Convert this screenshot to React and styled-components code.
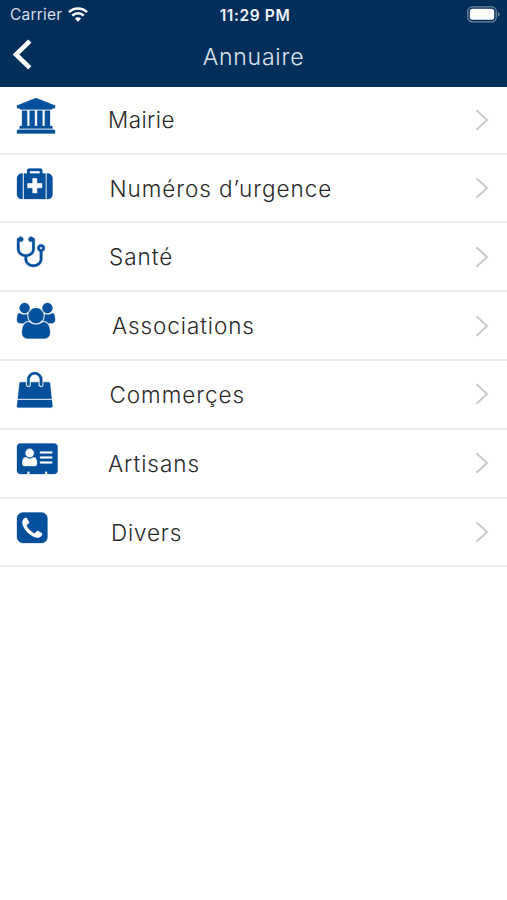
import React from "react";
import styled, { createGlobalStyle } from "styled-components"

const GlobalStyle = createGlobalStyle`
  body {
    margin: 0;
    background-color: #ffffff;
    font-family: Inter, "Liberation Sans", sans-serif;
  }
`

const Screen = styled.div`
  width: 100%;
  min-height: 900px;
  background-color: #ffffff;
`

const Header = styled.header`
  height: 87px;
  background-color: #022e5b;
  color: #ffffff;
`

const StatusBar = styled.div`
  display: grid;
  grid-template-columns: 1fr auto 1fr;
  align-items: center;
  height: 29px;
  padding: 0 7px 0 10px;
`

const Carrier = styled.div`
  display: flex;
  align-items: center;
  gap: 6px;
  font-size: 15.5px;
  letter-spacing: 0.2px;
  color: #d5deea;
  svg {
    display: block;
  }
`

const Clock = styled.div`
  padding-top: 1px;
  font-size: 15.5px;
  font-weight: 600;
  letter-spacing: 0.6px;
  color: #eef3f9;
`

const Battery = styled.svg`
  justify-self: end;
  display: block;
`

const NavBar = styled.div`
  display: grid;
  grid-template-columns: 60px 1fr 60px;
  align-items: center;
  height: 52px;
`

const BackButton = styled.button`
  display: flex;
  padding: 0 0 0 12px;
  border: 0;
  background: none;
`

const Title = styled.h1`
  margin: 3px 0 0;
  text-align: center;
  font-size: 23px;
  line-height: 28px;
  font-weight: 300;
  letter-spacing: 0.8px;
  color: #dbe4ee;
`

const List = styled.ul`
  margin: 0;
  padding: 0;
  list-style: none;
`

const Row = styled.li`
  box-sizing: border-box;
  display: grid;
  grid-template-columns: 91px 1fr auto;
  height: 68.8px;
  padding: 0 18px 0 17px;
  border-bottom: 2px solid #ececec;
  &:first-child {
    height: 67.7px;
  }
`

const IconCell = styled.div`
  display: flex;
  align-items: flex-end;
  height: 46.4px;
  svg {
    display: block;
    height: 35.5px;
    fill: #04509c;
    stroke: #04509c;
    stroke-width: 16px;
    overflow: visible;
  }
`

const Label = styled.span`
  align-self: center;
  padding: 1px 0 0 ${props => props.$indent}px;
  font-size: 22.5px;
  line-height: 30px;
  font-weight: 300;
  letter-spacing: ${props => props.$spacing}px;
  color: #2a2a2a;
  white-space: nowrap;
`

const Chevron = styled.svg`
  align-self: center;
  display: block;
`

const icons = {
  bank: {
    box: "0 0 1920 1792",
    path: "M960 0l960 384v128h-128q0 26-20.5 45t-48.5 19h-1526q-28 0-48.5-19t-20.5-45h-128v-128zm-704 640h256v768h128v-768h256v768h128v-768h256v768h128v-768h256v768h59q28 0 48.5 19t20.5 45v64h-1664v-64q0-26 20.5-45t48.5-19h59v-768zm1595 960q28 0 48.5 19t20.5 45v128h-1920v-128q0-26 20.5-45t48.5-19h1782z",
  },
  medkit: {
    box: "0 0 1792 1792",
    path: "M1280 1088v-192q0-14-9-23t-23-9h-224v-224q0-14-9-23t-23-9h-192q-14 0-23 9t-9 23v224h-224q-14 0-23 9t-9 23v192q0 14 9 23t23 9h224v224q0 14 9 23t23 9h192q14 0 23-9t9-23v-224h224q14 0 23-9t9-23zm-640-704h512v-128h-512v128zm-352 0v1280h-64q-92 0-158-66t-66-158v-832q0-92 66-158t158-66h64zm1152 0v1280h-1088v-1280h160v-160q0-40 28-68t68-28h576q40 0 68 28t28 68v160h160zm352 224v832q0 92-66 158t-158 66h-64v-1280h64q92 0 158 66t66 158z",
  },
  stethoscope: {
    box: "64 -70 1408 1792",
    path: "M1344 640q0-26-19-45t-45-19-45 19-19 45 19 45 45 19 45-19 19-45zm128 0q0 62-35.5 111t-92.5 70v395q0 159-131.5 271.5t-316.5 112.5-316.5-112.5-131.5-271.5v-132q-164-20-274-128t-110-252v-512q0-26 19-45t45-19q6 0 16 2 17-30 47-48t65-18q53 0 90.5 37.5t37.5 90.5-37.5 90.5-90.5 37.5q-33 0-64-18v402q0 106 94 181t226 75 226-75 94-181v-402q-31 18-64 18-53 0-90.5-37.5t-37.5-90.5 37.5-90.5 90.5-37.5q35 0 65 18t47 48q10-2 16-2 26 0 45 19t19 45v512q0 144-110 252t-274 128v132q0 106 94 181t226 75 226-75 94-181v-395q-57-21-92.5-70t-35.5-111q0-80 56-136t136-56 136 56 56 136z",
  },
  group: {
    box: "0 0 1920 1792",
    path: "M593 896q-162 5-265 128h-134q-82 0-138-40.5t-56-118.5q0-353 124-353 6 0 43.5 21t97.5 42.5 119 21.5q67 0 133-23-5 37-5 66 0 139 81 256zm1071 637q0 120-73 189.5t-194 69.5h-874q-121 0-194-69.5t-73-189.5q0-53 3.5-103.5t14-109 26.5-108.5 43-97.5 62-81 85.5-53.5 111.5-20q10 0 43 21.5t73 48 107 48 135 21.5 135-21.5 107-48 73-48 43-21.5q61 0 111.5 20t85.5 53.5 62 81 43 97.5 26.5 108.5 14 109 3.5 103.5zm-1024-1277q0 106-75 181t-181 75-181-75-75-181 75-181 181-75 181 75 75 181zm704 384q0 159-112.5 271.5t-271.5 112.5-271.5-112.5-112.5-271.5 112.5-271.5 271.5-112.5 271.5 112.5 112.5 271.5zm576 225q0 78-56 118.5t-138 40.5h-134q-103-123-265-128 81-117 81-256 0-29-5-66 66 23 133 23 59 0 119-21.5t97.5-42.5 43.5-21q124 0 124 353zm-128-609q0 106-75 181t-181 75-181-75-75-181 75-181 181-75 181 75 75 181z",
  },
  bag: {
    box: "0 0 1792 1792",
    path: "M1757 1408l35 313q3 28-16 50-19 21-48 21h-1664q-29 0-48-21-19-22-16-50l35-313h1722zm-93-839l86 775h-1708l86-775q3-24 21-40.5t43-16.5h256v128q0 53 37.5 90.5t90.5 37.5 90.5-37.5 37.5-90.5v-128h384v128q0 53 37.5 90.5t90.5 37.5 90.5-37.5 37.5-90.5v-128h256q25 0 43 16.5t21 40.5zm-384-185v256q0 26-19 45t-45 19-45-19-19-45v-256q0-106-75-181t-181-75-181 75-75 181v256q0 26-19 45t-45 19-45-19-19-45v-256q0-159 112.5-271.5t271.5-112.5 271.5 112.5 112.5 271.5z",
  },
  card: {
    box: "0 0 2048 1792",
    path: "M1024 1131q0-64-9-117.5t-29.5-103-60.5-78-97-28.5q-6 4-30 18t-37.5 21.5-35.5 17.5-43 14.5-42 4.5-42-4.5-43-14.5-35.5-17.5-37.5-21.5-30-18q-57 0-97 28.5t-60.5 78-29.5 103-9 117.5 37 106.5 91 42.5h512q54 0 91-42.5t37-106.5zm-157-520q0-94-66.5-160.5t-160.5-66.5-160.5 66.5-66.5 160.5 66.5 160.5 160.5 66.5 160.5-66.5 66.5-160.5zm925 509v-64q0-14-9-23t-23-9h-576q-14 0-23 9t-9 23v64q0 14 9 23t23 9h576q14 0 23-9t9-23zm0-260v-56q0-15-10.5-25.5t-25.5-10.5h-568q-15 0-25.5 10.5t-10.5 25.5v56q0 15 10.5 25.5t25.5 10.5h568q15 0 25.5-10.5t10.5-25.5zm0-252v-64q0-14-9-23t-23-9h-576q-14 0-23 9t-9 23v64q0 14 9 23t23 9h576q14 0 23-9t9-23zm256-320v1216q0 66-47 113t-113 47h-352v-96q0-14-9-23t-23-9h-64q-14 0-23 9t-9 23v96h-768v-96q0-14-9-23t-23-9h-64q-14 0-23 9t-9 23v96h-352q-66 0-113-47t-47-113v-1216q0-66 47-113t113-47h1728q66 0 113 47t47 113z",
  },
  phone: {
    box: "128 0 1536 1792",
    path: "M1408 1193q0-11-2-16t-18-16.5-40.5-25-47.5-26.5-45.5-25-28.5-15q-5-3-19-13t-25-15-21-5q-15 0-36.5 20.5t-39.5 45-38.5 45-33.5 20.5q-7 0-16.5-3.5t-15.5-6.5-17-9.5-14-8.5q-99-55-170-126.5t-127-170.5q-2-3-8.5-14t-9.5-17-6.5-15.5-3.5-16.5q0-13 20.5-33.5t45-38.5 45-39.5 20.5-36.5q0-10-5-21t-15-25-13-19q-3-6-15-28.5t-25-45.5-26.5-47.5-25-40.5-16.5-18-16-2q-48 0-101 22-46 21-80 94.5t-34 130.5q0 16 2.5 34t5 30.5 9 33 10 29.5 12.5 33 11 30q60 164 216.5 320.5t320.5 216.5q6 2 30 11t33 12.5 29.5 10 33 9 30.5 5 34 2.5q57 0 130.5-34t94.5-80q22-53 22-101zm256-777v960q0 119-84.5 203.5t-203.5 84.5h-960q-119 0-203.5-84.5t-84.5-203.5v-960q0-119 84.5-203.5t203.5-84.5h960q119 0 203.5 84.5t84.5 203.5z",
  },
}

const categories = [
  { label: "Mairie", icon: "bank", indent: 0, spacing: 0.4 },
  { label: "Numéros d’urgence", icon: "medkit", indent: 1.5, spacing: 0.95 },
  { label: "Santé", icon: "stethoscope", indent: 1, spacing: 0.95 },
  { label: "Associations", icon: "group", indent: 4, spacing: 0.9 },
  { label: "Commerçes", icon: "bag", indent: 1.5, spacing: 0.95 },
  { label: "Artisans", icon: "card", indent: 0, spacing: 0.95 },
  { label: "Divers", icon: "phone", indent: 3, spacing: 0.8 },
]

const Icon = ({ name }) => (
  <svg viewBox={icons[name].box} aria-hidden="true">
    <path d={icons[name].path} />
  </svg>
)

const Wifi = () => (
  <svg width="20" height="15" viewBox="0 0 20 15" fill="none" stroke="#ffffff" strokeWidth="2.5">
    <path d="M1 5.2a12.8 12.8 0 0 1 18 0" />
    <path d="M4.3 8.6a8.1 8.1 0 0 1 11.4 0" />
    <path d="M10 14.8L6.9 11.6a4.4 4.4 0 0 1 6.2 0z" fill="#ffffff" stroke="none" />
  </svg>
)

const App = () => (
  <Screen>
    <GlobalStyle />
    <Header>
      <StatusBar>
        <Carrier>
          Carrier
          <Wifi />
        </Carrier>
        <Clock>11:29 PM</Clock>
        <Battery width="33" height="17" viewBox="0 0 33 17">
          <rect x="0.8" y="0.8" width="28.4" height="15" rx="4.5" fill="none" stroke="#7188a3" strokeWidth="1.3" />
          <rect x="2.8" y="2.8" width="24.4" height="11" rx="2.6" fill="#ffffff" />
          <path d="M30.8 6v5q1.8-0.8 1.8-2.5t-1.8-2.5z" fill="#7188a3" />
        </Battery>
      </StatusBar>
      <NavBar>
        <BackButton aria-label="Retour">
          <svg width="21" height="32" viewBox="0 0 21 32" fill="none" stroke="#ffffff" strokeWidth="4.6">
            <path d="M17.8 2.2L4 15.5l13.8 13.3" />
          </svg>
        </BackButton>
        <Title>Annuaire</Title>
      </NavBar>
    </Header>
    <List>
      {categories.map(category => (
        <Row key={category.label}>
          <IconCell>
            <Icon name={category.icon} />
          </IconCell>
          <Label $indent={category.indent} $spacing={category.spacing}>{category.label}</Label>
          <Chevron width="14" height="22" viewBox="0 0 14 22" fill="none" stroke="#cacaca" strokeWidth="2">
            <path d="M1.5 1.3L12 11 1.5 20.7" />
          </Chevron>
        </Row>
      ))}
    </List>
  </Screen>
)

export default App
